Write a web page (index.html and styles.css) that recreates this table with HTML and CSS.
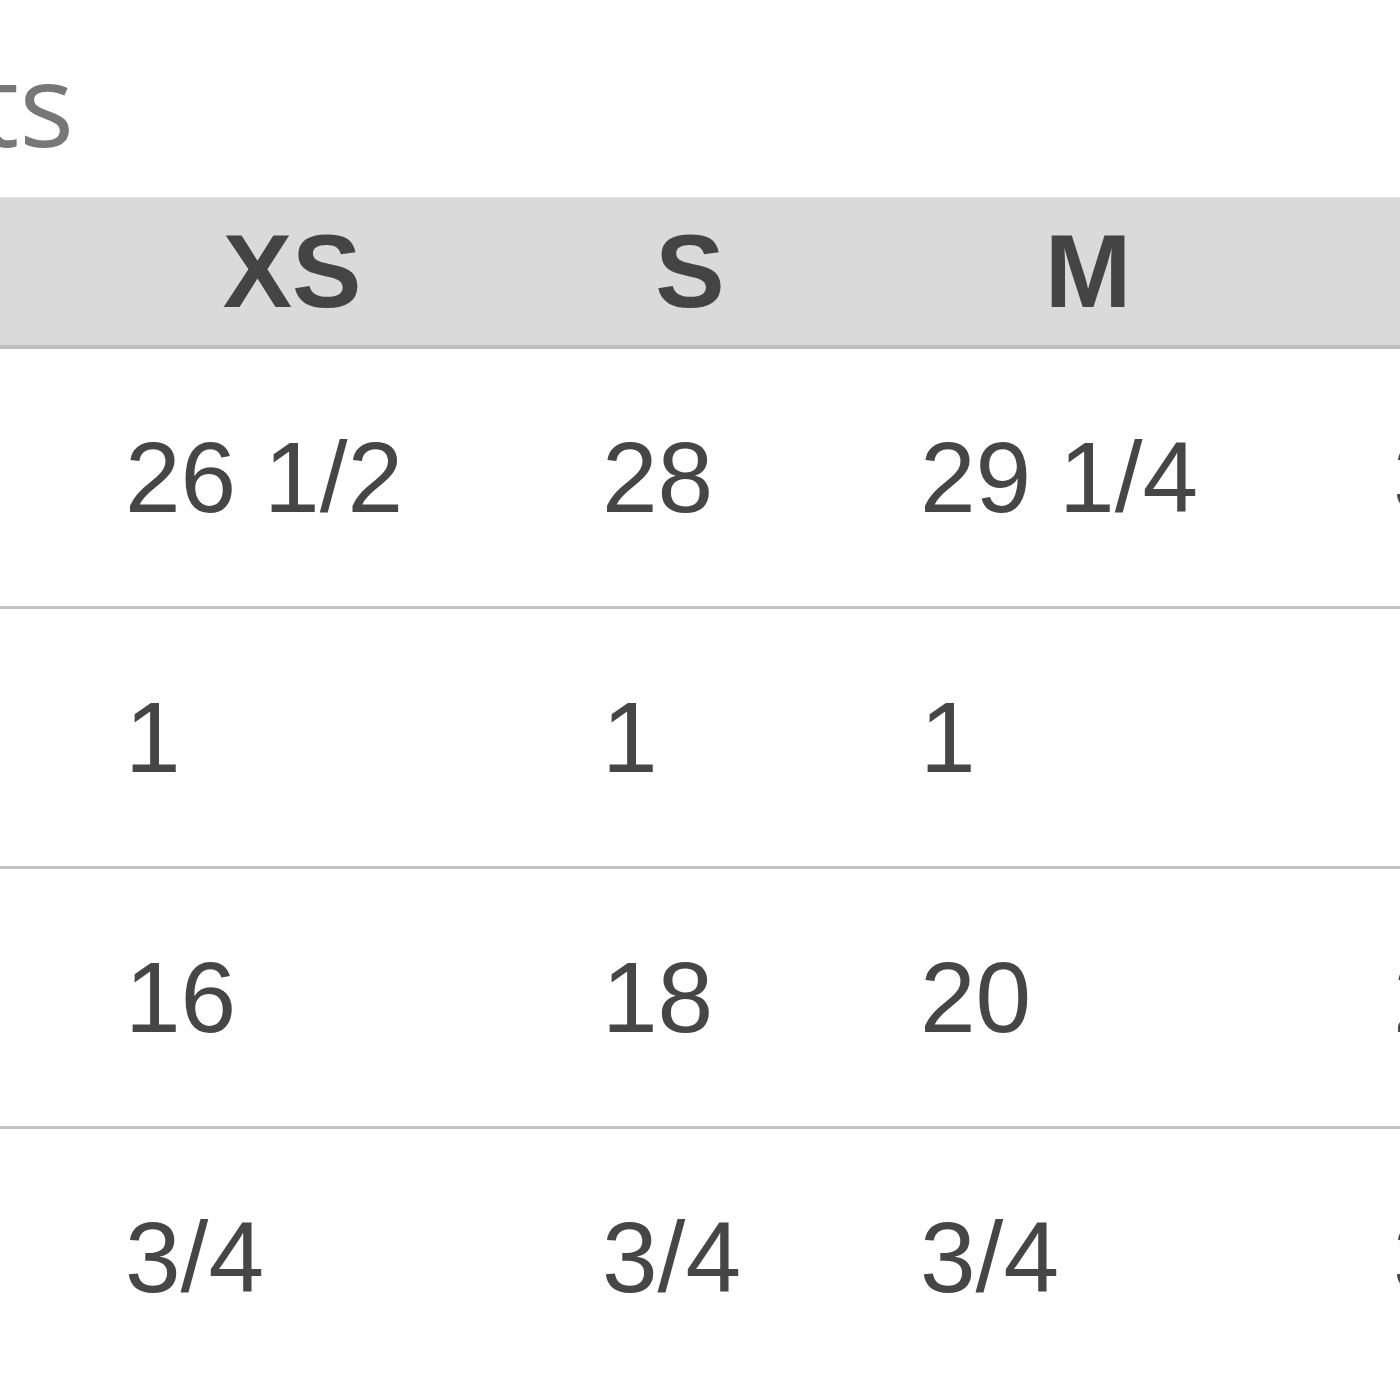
FILE: index.html
```html
<!DOCTYPE html>
<html lang="en">
<head>
<meta charset="utf-8">
<title>Size Chart</title>
<link rel="stylesheet" href="styles.css">
</head>
<body>
<div class="page">
  <div class="title-wrap">
    <h2 class="title">Measurements</h2>
  </div>
  <div class="chart">
    <div class="head-row">
      <div class="head-cell">XS</div>
      <div class="head-cell">S</div>
      <div class="head-cell">M</div>
      <div class="head-cell">L</div>
    </div>
    <div class="row">
      <div class="cell">26 1/2</div>
      <div class="cell">28</div>
      <div class="cell">29 1/4</div>
      <div class="cell">30 1/2</div>
    </div>
    <div class="row">
      <div class="cell">1</div>
      <div class="cell">1</div>
      <div class="cell">1</div>
      <div class="cell">1</div>
    </div>
    <div class="row">
      <div class="cell">16</div>
      <div class="cell">18</div>
      <div class="cell">20</div>
      <div class="cell">22</div>
    </div>
    <div class="row last">
      <div class="cell">3/4</div>
      <div class="cell">3/4</div>
      <div class="cell">3/4</div>
      <div class="cell">3/4</div>
    </div>
  </div>
</div>
</body>
</html>
```
FILE: styles.css
```css
html, body {
  margin: 0;
  padding: 0;
  background: #ffffff;
}
body {
  width: 1400px;
  height: 1400px;
  overflow: hidden;
}
.page {
  width: 1400px;
  overflow: hidden;
}
.title-wrap {
  width: 74px;
  display: flex;
  justify-content: flex-end;
  margin-top: 25px;
  margin-bottom: 16px;
}
.title {
  margin: 0;
  flex: none;
  white-space: nowrap;
  font-family: "Open Sans", "Noto Sans", sans-serif;
  font-weight: 400;
  font-size: 115px;
  line-height: 156px;
  height: 156px;
  color: #777777;
}
.chart {
  width: 1400px;
  font-family: "Liberation Sans", Arial, sans-serif;
  color: #464646;
}
.head-row {
  display: flex;
  padding-left: 93px;
  height: 147px;
  background: #dadada;
  border-top: 1px solid #e6e6e6;
  border-bottom: 4px solid #bcbcbc;
  box-sizing: content-box;
}
.head-cell {
  flex: none;
  width: 398px;
  display: flex;
  align-items: center;
  justify-content: center;
  font-weight: 700;
  font-size: 104px;
  color: #444444;
}
.row {
  display: grid;
  grid-template-columns: 477px 318px 473px 400px;
  padding-left: 125px;
  height: 257px;
  border-bottom: 3px solid #c2c2c2;
  align-items: center;
  white-space: nowrap;
}
.row.last {
  border-bottom: none;
}
.cell {
  font-size: 100px;
  line-height: 1.15;
}
```
